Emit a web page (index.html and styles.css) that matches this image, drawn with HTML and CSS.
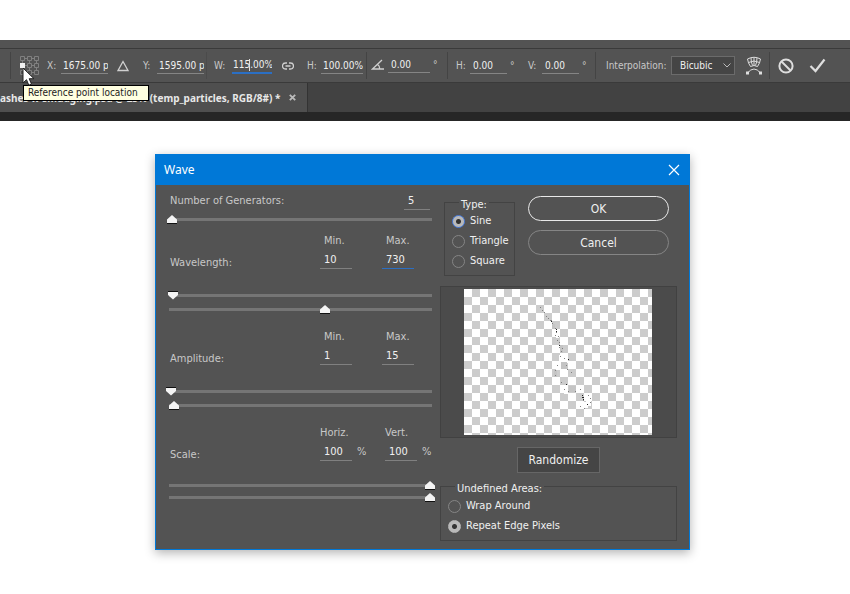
FILE: index.html
```
<!DOCTYPE html>
<html lang="en">
<head>
<meta charset="utf-8">
<title>Wave</title>
<link rel="stylesheet" href="styles.css">
</head>
<body>
<header class="workspace">
  <div class="options-bar">
    <i class="divider"></i>
    <button class="icon-button anchor-button" aria-label="Reference point location">
      <svg class="anchor-grid" width="19" height="19" viewBox="0 0 19 19" fill="none" stroke="#808080">
        <path d="M5 2.500h2M12 2.500h2M5 9.500h2M12 9.500h2M5 16.500h2M12 16.500h2M2.500 5v2M2.500 12v2M9.500 5v2M9.500 12v2M16.500 5v2M16.500 12v2"/>
        <path d="M.5.5h4v4h-4zM7.500.5h4v4h-4zM14.500.5h4v4h-4zM7.500 7.500h4v4h-4zM14.500 7.500h4v4h-4zM.5 14.500h4v4h-4zM7.500 14.500h4v4h-4zM14.500 14.500h4v4h-4z"/>
        <path d="M0 7h5v5H0z" fill="#f0f0f0" stroke="none"/>
      </svg>
      <svg class="cursor" width="14" height="20" viewBox="0 0 14 20"><path d="M1 1v15l3.500-3.300 2.300 5.500 2.700-1.100-2.300-5.400H12z" fill="#fff" stroke="#222"/></svg>
      <span class="tooltip">Reference point location</span>
    </button>
    <label class="field"><span>X:</span><input class="wide" value="1675.00 px"></label>
    <button class="icon-button" aria-label="Relative positioning"><svg width="12" height="12" viewBox="0 0 12 12"><path d="M6 1.500 11 10.500H1z" fill="none" stroke="#d0d0d0" stroke-width="1.300"/></svg></button>
    <label class="field"><span>Y:</span><input class="wide" value="1595.00 px"></label>
    <i class="divider faint"></i>
    <label class="field"><span>W:</span><span class="caret-field"><input class="active" value="115.00%"></span></label>
    <button class="icon-button" aria-label="Maintain aspect ratio"><svg width="12" height="8" viewBox="0 0 12 8" fill="none" stroke="#d0d0d0" stroke-width="1.300"><path d="M5 1H3.500a2.800 2.800 0 0 0 0 6H5M7 1h1.500a2.800 2.800 0 0 1 0 6H7M3.500 4h5"/></svg></button>
    <label class="field"><span>H:</span><input value="100.00%"></label>
    <i class="divider"></i>
    <label class="field raised"><svg role="img" aria-label="Rotate" width="14" height="12" viewBox="0 0 14 12" fill="none" stroke="#d0d0d0" stroke-width="1.300"><path d="M11 1 1.500 10H13M6.500 5.500c1.800 1 2.300 2.800 2 4.500"/></svg><input value="0.00"><span>°</span></label>
    <i class="divider"></i>
    <label class="field"><span>H:</span><input class="short" value="0.00"><span>°</span></label>
    <label class="field"><span>V:</span><input class="short" value="0.00"><span>°</span></label>
    <i class="divider"></i>
    <label class="field interpolation"><span>Interpolation:</span><span class="select-box"><select><option>Bicubic</option></select><svg width="8" height="5" viewBox="0 0 8 5"><path d="m.5.5 3.500 3.500L7.500.5" fill="none" stroke="#bbb"/></svg></span></label>
    <button class="icon-button" aria-label="Warp"><svg width="16" height="19" viewBox="0 0 16 19" fill="none" stroke="#dedede"><path d="M1.500 3Q8-.5 14.500 3Q14 7 11.500 10.500Q8 8.500 4.500 10.500Q2 7 1.500 3zM2.500 6.500Q8 3.500 13.500 6.500M8 1.500v8M5 2q0 4 1.500 7.500M11 2q0 4-1.500 7.500M1.500 17Q8 9 14.500 17"/><path d="M0 15.500h3v3H0zM13 15.500h3v3h-3z" fill="#dedede" stroke="none"/></svg></button>
    <i class="divider"></i>
    <button class="icon-button" aria-label="Cancel transform"><svg width="16" height="16" viewBox="0 0 16 16" fill="none" stroke="#dedede" stroke-width="2"><circle cx="8" cy="8" r="6.600"/><path d="m3.500 3.500 9 9"/></svg></button>
    <button class="icon-button" aria-label="Commit transform"><svg width="17" height="15" viewBox="0 0 17 15"><path d="m1.500 8 5 5L15.500 1.500" fill="none" stroke="#dedede" stroke-width="2.200"/></svg></button>
  </div>
  <div class="tab-row">
    <div class="tab"><span>ashes w smudging.psd @ 25% (temp_particles, RGB/8#) *</span><button class="icon-button" aria-label="Close tab"><svg width="7" height="7" viewBox="0 0 7 7"><path d="m.8.8 5.400 5.400M6.200.8.800 6.200" stroke="#bbb" stroke-width="1.800"/></svg></button></div>
  </div>
</header>
<main>
  <form class="dialog" role="dialog" aria-labelledby="title">
    <div class="title-bar"><h1 id="title">Wave</h1><button type="button" class="icon-button" aria-label="Close"><svg width="12" height="12" viewBox="0 0 12 12"><path d="m1 1 10 10M11 1 1 11" stroke="#fff" stroke-width="1.200"/></svg></button></div>
    <div class="dialog-body">
      <div class="settings">
        <div class="generators"><label for="gen">Number of Generators:</label><input id="gen" value="5"></div>
        <div class="sliders"><input type="range" aria-label="Generators" max="259" value="1"></div>
        <div class="values"><label class="min" for="wmin">Min.</label><label for="wmax">Max.</label><span class="name">Wavelength:</span><div><input id="wmin" value="10"></div><div><input id="wmax" class="active" value="730"></div></div>
        <div class="sliders"><input class="down" type="range" aria-label="Minimum wavelength" max="259" value="2"><input type="range" aria-label="Maximum wavelength" max="259" value="154"></div>
        <div class="values"><label class="min" for="amin">Min.</label><label for="amax">Max.</label><span class="name">Amplitude:</span><div><input id="amin" value="1"></div><div><input id="amax" value="15"></div></div>
        <div class="sliders"><input class="down" type="range" aria-label="Minimum amplitude" max="259" value="0"><input type="range" aria-label="Maximum amplitude" max="259" value="3"></div>
        <div class="values scale"><label class="min" for="sh">Horiz.</label><label for="sv">Vert.</label><span class="name">Scale:</span><div><input id="sh" value="100"><span>%</span></div><div><input id="sv" value="100"><span>%</span></div></div>
        <div class="sliders tight"><input type="range" aria-label="Horizontal scale" max="259" value="259"><input type="range" aria-label="Vertical scale" max="259" value="259"></div>
      </div>
      <div class="side">
        <div class="top">
          <fieldset class="type"><legend>Type:</legend>
            <label><input type="radio" name="type" class="focused" checked>Sine</label>
            <label><input type="radio" name="type">Triangle</label>
            <label><input type="radio" name="type">Square</label>
          </fieldset>
          <div class="actions"><button class="pill primary">OK</button><button type="button" class="pill">Cancel</button></div>
        </div>
        <div class="preview">
          <svg class="canvas" width="188" height="146" viewBox="0 0 188 146" role="img" aria-label="Preview">
            <path d="M95 66h9v8h-9zM92 74h5v7h-5zM92 41h3v8h-3zM100 96h4v9h-4zM112 97h8v7h-8zM122 105h5v12h-5zM115 113h9v6h-9z" fill="#fff"/>
            <path d="M88 35h3v5h-3zM96 56h3v8h-3zM90 81h3v7h-3zM105 97h7v6h-7zM97 73h6v7h-6z" fill="#c4c4c4"/>
            <path d="M76 18.500h1M78 21.500h1M80 23.500h1M82 27.500h1M84 29.500h1M86 31.500h2M88 34.500h1M91 39.500h1M92 43.500h1M91 46.500h1M94 47.500h1M93 51.500h1M95 53.500h1M95 58.500h1M98 59.500h1M97 62.500h1M96 67.500h1M100 69.500h1M93 76.500h1M102 76.500h1M103 80.500h1M107 83.500h1M91 81.500h1M91 86.500h1M97 93.500h1M102 95.500h1M100 100.500h1M104 102.500h1M111 102.500h1M116 100.500h1M124 106.500h1M126 109.500h1M119 111.500h1M126 113.500h1M123 115.500h1M116 117.500h1M120 119.500h1" stroke="#808080"/>
            <path d="M87 32.500h1M92 40.500h1M92 42.500h1M95 56.500h1M104 70.500h1M118 106.500h1M118 108.500h2M119 110.500h1M123 115.500h1M102 95.500h1" stroke="#222"/>
          </svg>
        </div>
        <button type="button" class="randomize">Randomize</button>
        <fieldset class="areas"><legend>Undefined Areas:</legend>
          <label><input type="radio" name="area">Wrap Around</label>
          <label><input type="radio" name="area" checked>Repeat Edge Pixels</label>
        </fieldset>
      </div>
    </div>
  </form>
</main>
</body>
</html>
```
FILE: styles.css
```
* { box-sizing: border-box; }
body { margin: 0; background: #fff; color: #c8c8c8; font: 11px/16px "DejaVu Sans Condensed", "Noto Sans", sans-serif; }
input, button, select { font: inherit; color: inherit; border: 0; margin: 0; padding: 0; background: none; outline: 0; }
svg { display: block; flex: none; }
.icon-button { display: grid; place-items: center; justify-self: start; }

.workspace { margin-top: 40px; padding-top: 8px; background: #535353; border-bottom: 9px solid #262626; }
.options-bar {
  display: grid; height: 35px; align-items: center; font-size: 10px;
  grid-template-columns: 10px 27px 70px 26px 63px 8px 68px 25px 59px 5px 76px 9px 72px 67px 11px 140px 23px 9px 31px 1fr;
  padding-left: 10px; border-top: 1px solid #3a3a3a; border-bottom: 1px solid #3a3a3a;
}
.divider { width: 1px; height: 27px; background: #444; }
.divider.faint { background: #4b4b4b; }
.anchor-button { position: relative; }
.cursor { position: absolute; left: 2px; top: 11px; z-index: 3; }
.tooltip {
  position: absolute; left: 3px; top: 29px; z-index: 2; padding: 0 10px 0 4px;
  background: #ffffe1; border: 1px solid #000; color: #222; line-height: 14px; white-space: nowrap;
}
.field { display: flex; align-items: center; }
.field > span:first-child { min-width: 14px; }
.field input { width: 42px; height: 17px; padding-left: 2px; border-bottom: 1px solid #858585; color: #f0f0f0; }
.field input.wide { width: 47px; }
.field input.short { width: 37px; padding-left: 3px; }
.field input + span { margin-left: 3px; }
.field.raised { padding-bottom: 2px; }
.field.raised input { margin-left: 3px; padding-left: 3px; }
.field input.active { border-bottom: 2px solid #2b6fc4; width: 40px; padding-left: 1px; }
.field .caret-field { position: relative; margin-left: 4px; }
.caret-field::after { content: ""; position: absolute; left: 17px; top: 2px; width: 1px; height: 12px; background: #ddd; }
.interpolation { justify-content: space-between; padding-right: 11px; }
.select-box { position: relative; }
.select-box select { appearance: none; width: 64px; height: 19px; padding-left: 8px; background: #454545; border: 1px solid #6b6b6b; color: #f0f0f0; }
.select-box svg { position: absolute; right: 4px; top: 7px; pointer-events: none; }
.tab-row { display: flex; height: 29px; background: #424242; }
.tab { display: flex; align-items: center; gap: 9px; padding-right: 11px; background: #4f4f4f; border-right: 1px solid #333; color: #e8e8e8; font: bold 10px/16px "Noto Sans", sans-serif; white-space: nowrap; }

main { padding: 33px 160px 45px 155px; }
.dialog { background: #535353; border: 1px solid #0078d7; box-shadow: 0 3px 10px rgba(0,0,0,.3); }
.title-bar { display: flex; justify-content: space-between; align-items: center; height: 30px; padding: 0 9px 0 8px; background: #0078d7; color: #fff; }
.title-bar h1 { margin: 0; font: 12px/16px "Noto Sans", sans-serif; }
.dialog-body { display: grid; grid-template-columns: 1fr 237px; gap: 5px; padding: 8px 12px 8px 10px; }
.settings input { color: #f0f0f0; }
.generators { display: flex; justify-content: space-between; padding: 0 5px 0 4px; height: 17px; }
.generators input { width: 26px; padding-left: 4px; border-bottom: 1px solid #808080; }
.sliders { display: grid; gap: 3px; margin: 4px 0 8px; }
.values { display: grid; grid-template-columns: 1fr 62px 53px; grid-template-rows: 16px 17px; row-gap: 3px; padding-left: 4px; }
.values > label { padding-left: 4px; }
.values .min { grid-column: 2; }
.values .name { grid-row: 2; align-self: end; line-height: 13px; }
.values div { display: flex; }
.values input { width: 32px; height: 17px; padding: 0 0 1px 4px; border-bottom: 1px solid #808080; }
.values input.active { border-color: #2b6fc4; }
.values.scale { grid-template-columns: 1fr 65px 50px; }
.values.scale > label { padding-left: 0; }
.values div span { margin-left: 5px; }
.values + .sliders { margin: 21px 0 14px; }
.values + .sliders.tight { margin: 19px 0 0; gap: 1px; }
input[type="range"] { appearance: none; width: 100%; height: 11px; background: linear-gradient(#757575, #757575) 50% / calc(100% - 6px) 3px no-repeat; }
input[type="range"]::-webkit-slider-thumb {
  appearance: none; width: 10px; height: 9px;
  background: linear-gradient(#f4f4f4 8px, #111 8px);
  clip-path: polygon(50% 0, 100% 50%, 100% 100%, 0 100%, 0 50%);
}
input[type="range"].down::-webkit-slider-thumb {
  background: linear-gradient(#111 1px, #f4f4f4 1px);
  clip-path: polygon(0 0, 100% 0, 100% 50%, 50% 100%, 0 50%);
  margin-top: -1px;
}
.side { color: #f0f0f0; }
.top { display: flex; justify-content: space-between; padding: 0 8px 0 4px; }
fieldset { margin: 0; padding: 0; border: 1px solid #434343; }
legend { margin-left: 7px; padding: 5px 2px 0; line-height: 14px; }
fieldset label { display: flex; align-items: center; height: 20px; gap: 5px; white-space: nowrap; }
.type { width: 71px; height: 83px; padding-left: 7px; }
.type legend { line-height: 13px; }
input[type="radio"] { appearance: none; flex: none; width: 13px; height: 13px; border: 1px solid #858585; border-radius: 50%; }
input[type="radio"]:checked { background: radial-gradient(circle, #333 2px, #b9b9b9 3px); border-color: #b9b9b9; }
input[type="radio"].focused { border-color: #4a7fe0; }
.actions { display: grid; width: 141px; gap: 9px; align-content: start; padding-top: 3px; }
.pill { height: 25px; border: 1px solid #858585; border-radius: 13px; font-size: 12px; }
.pill.primary { border-color: #e8e8e8; }
.preview { display: flex; justify-content: center; height: 152px; margin-top: 10px; padding: 2px 2px 3px 0; background: #4b4b4b; border: 1px solid #414141; }
.canvas { background: repeating-conic-gradient(#ccc 0 25%, #fff 0 50%) 0 0 / 16px 16px; }
.randomize { display: block; width: 83px; height: 26px; margin: 9px auto 0; background: #454545; border: 1px solid #666; font-size: 12px; }
.areas { margin-top: 4px; padding-left: 7px; height: 64px; }
```
